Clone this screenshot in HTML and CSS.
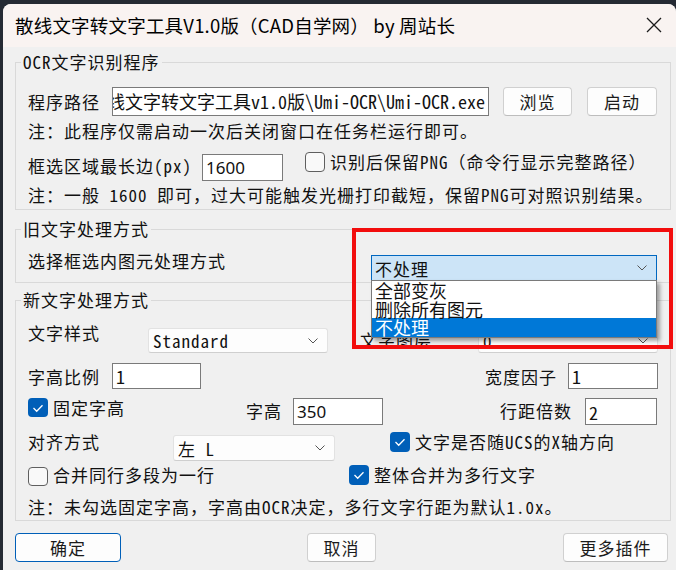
FILE: index.html
```html
<!DOCTYPE html>
<html lang="zh-CN">
<head>
	<meta charset="UTF-8">
	<title>散线文字转文字工具V1.0版</title>
	<link rel="stylesheet" href="styles.css">
</head>
<body>
<div class="window">
	<div class="titlebar">
		<span class="title">散线文字转文字工具V1.0版（CAD自学网） by 周站长</span>
		<svg class="close" width="16" height="16" viewBox="0 0 16 16"><path d="M1 1L15 15M15 1L1 15" stroke="#1b1b1b" stroke-width="1.3" fill="none"/></svg>
	</div>

	<div class="main">
		<!-- OCR -->
		<fieldset class="group g-ocr">
			<legend>OCR文字识别程序</legend>
			<div class="row r-path">
				<span class="lbl w84">程序路径</span>
				<div class="pathbox"><span>线文字转文字工具v1.0版\Umi-OCR\Umi-OCR.exe</span></div>
				<button class="btn b-browse">浏览</button>
				<button class="btn b-start">启动</button>
			</div>
			<div class="note">注：此程序仅需启动一次后关闭窗口在任务栏运行即可。</div>
			<div class="row r-size">
				<span class="lbl w174 lh30">框选区域最长边(px)</span>
				<div class="field f-size sans">1600</div>
				<span class="chk c-png"></span>
				<span class="lbl lh22 ml5">识别后保留PNG（命令行显示完整路径）</span>
			</div>
			<div class="note n2">注：一般 1600 即可，过大可能触发光栅打印截短，保留PNG可对照识别结果。</div>
		</fieldset>

		<!-- 旧文字 -->
		<fieldset class="group g-old">
			<legend>旧文字处理方式</legend>
			<div class="row r-old">
				<span class="lbl w343 lh26">选择框选内图元处理方式</span>
				<div class="combo open c-old">
					<span>不处理</span>
					<svg class="chev" width="10" height="6" viewBox="0 0 10 6"><path d="M0.5 0.5L5 5L9.5 0.5" stroke="#555" fill="none"/></svg>
					<ul class="droplist">
						<li>全部变灰</li>
						<li>删除所有图元</li>
						<li class="sel">不处理</li>
					</ul>
				</div>
			</div>
		</fieldset>

		<!-- 新文字 -->
		<fieldset class="group g-new">
			<legend>新文字处理方式</legend>
			<div class="row r-style">
				<span class="lbl w120 lh20">文字样式</span>
				<div class="combo c-style">
					<span>Standard</span>
					<svg class="chev" width="10" height="6" viewBox="0 0 10 6"><path d="M0.5 0.5L5 5L9.5 0.5" stroke="#555" fill="none"/></svg>
				</div>
				<span class="lbl w118 lh20 l-layer">文字图层</span>
				<div class="combo c-layer">
					<span>0</span>
					<svg class="chev" width="10" height="6" viewBox="0 0 10 6"><path d="M0.5 0.5L5 5L9.5 0.5" stroke="#555" fill="none"/></svg>
				</div>
			</div>
			<div class="row r-ratio">
				<span class="lbl w84">字高比例</span>
				<div class="field f-ratio">1</div>
				<span class="lbl w83 l-width">宽度因子</span>
				<div class="field f-width">1</div>
			</div>
			<div class="row r-height">
				<span class="chk on"><svg width="20" height="20" viewBox="0 0 20 20"><path d="M5.5 10L8.7 13.2L14.5 7.2" stroke="#fff" stroke-width="1.3" fill="none"/></svg></span>
				<span class="lbl w193 lh20 ml5">固定字高</span>
				<span class="lbl w47 lh20 mt3">字高</span>
				<div class="field f-height sans">350</div>
				<span class="lbl w85 lh20 mt3 l-spacing">行距倍数</span>
				<div class="field f-spacing">2</div>
			</div>
			<div class="row r-align">
				<span class="lbl w145 lh20">对齐方式</span>
				<div class="combo c-align">
					<span>左 L</span>
					<svg class="chev" width="10" height="6" viewBox="0 0 10 6"><path d="M0.5 0.5L5 5L9.5 0.5" stroke="#555" fill="none"/></svg>
				</div>
				<span class="chk on c-ucs"><svg width="20" height="20" viewBox="0 0 20 20"><path d="M5.5 10L8.7 13.2L14.5 7.2" stroke="#fff" stroke-width="1.3" fill="none"/></svg></span>
				<span class="lbl lh20 ml5">文字是否随UCS的X轴方向</span>
			</div>
			<div class="row r-merge">
				<div class="opt w321">
					<span class="chk c-line"></span>
					<span class="lbl lh20 ml5">合并同行多段为一行</span>
				</div>
				<span class="chk on"><svg width="20" height="20" viewBox="0 0 20 20"><path d="M5.5 10L8.7 13.2L14.5 7.2" stroke="#fff" stroke-width="1.3" fill="none"/></svg></span>
				<span class="lbl lh20 ml5">整体合并为多行文字</span>
			</div>
			<div class="note n3">注：未勾选固定字高，字高由OCR决定，多行文字行距为默认1.0x。</div>
		</fieldset>

		<div class="actions">
			<button class="btn default b-ok">确定</button>
			<button class="btn b-cancel">取消</button>
			<button class="btn b-more">更多插件</button>
		</div>
	</div>

	<div class="mark"></div>
</div>
</body>
</html>
```

FILE: styles.css
```css
body {
	margin : 0;
	background-color : #252a33;
	font-family : "Noto Sans Mono CJK SC", "Noto Sans CJK SC", sans-serif;
	font-size : 17px;
	letter-spacing : 1px;
	color : #111;
}
.window {
	position : relative;
	margin : 4px 0 0 3px;
	height : 566px;
	background-color : #f0f0f0;
	border-radius : 8px 8px 0 0;
	overflow : hidden;
}
.titlebar {
	height : 43px;
	display : flex;
	align-items : center;
	justify-content : space-between;
	padding : 0 14px 0 12px;
	background-color : #f9f3f1;
}
.title {
	font-family : "Noto Sans CJK SC", "Noto Sans", sans-serif;
	font-size : 18.5px;
	letter-spacing : 0.2px;
	color : #000;
	margin-top : -1px;
}
.close {
	margin-top : -2px;
}

.main {
	padding : 4px 5px 0 12px;
}

/* 分组框 */
.group {
	margin : 0;
	padding : 0;
	min-width : 0;
	border : 1px solid #d9d9d9;
}
.group legend {
	margin-left : 5px;
	padding : 0 2px;
	line-height : 22px;
}
.g-ocr { padding-top : 13px; }
.g-old { margin-top : 8px; padding-bottom : 1px; }
.g-new { margin-top : 6px; }

.row {
	display : flex;
	align-items : flex-start;
	padding-left : 12px;
}
.lbl {
	flex : none;
	white-space : nowrap;
}
.lh20 { line-height : 20px; }
.lh22 { line-height : 22px; }
.lh26 { line-height : 26px; }
.lh30 { line-height : 30px; }
.ml5 { margin-left : 5px; }
.mt3 { margin-top : 3px; }
.w47 { width : 47px; }
.w83 { width : 83px; }
.w84 { width : 84px; }
.w85 { width : 85px; }
.w118 { width : 118px; }
.w120 { width : 120px; }
.w145 { width : 145px; }
.w174 { width : 174px; }
.w193 { width : 193px; }
.w321 { width : 321px; }
.w343 { width : 343px; }

.note {
	padding-left : 12px;
	line-height : 30px;
	white-space : nowrap;
}
.note.n2 { line-height : 28px; }
.note.n3 { margin-top : 8px; line-height : 26px; }

/* 输入框 */
.pathbox, .field {
	box-sizing : border-box;
	flex : none;
	display : flex;
	align-items : center;
	background-color : #fff;
	border : 1px solid #7a7a7a;
	overflow : hidden;
	white-space : nowrap;
	padding : 0 3px;
	letter-spacing : 0;
	font-size : 18px;
}
.sans {
	font-family : "Noto Sans", sans-serif;
	font-size : 17px;
}
.r-path {
	height : 30px;
	align-items : center;
}
.pathbox {
	width : 377px;
	height : 29px;
	justify-content : flex-end;
}
.r-size { margin-top : 5px; }
.f-size { width : 81px; height : 27px; margin-top : 3px; }
.f-ratio { width : 89px; height : 26px; }
.f-width { width : 90px; height : 26px; }
.f-height { width : 90px; height : 27px; }
.f-spacing { width : 72px; height : 27px; }

/* 按钮 */
.btn {
	box-sizing : border-box;
	flex : none;
	height : 29px;
	padding : 0;
	background-color : #fdfdfd;
	border : 1px solid #d0d0d0;
	border-bottom-color : #bdbdbd;
	border-radius : 4px;
	font-family : inherit;
	font-size : 17px;
	letter-spacing : 1px;
	color : #1b1b1b;
}
.btn.default {
	border : 1px solid #005fb8;
}
.b-browse { width : 69px; margin-left : 14px; }
.b-start { width : 70px; margin-left : 15px; }

/* 复选框 */
.chk {
	box-sizing : border-box;
	flex : none;
	width : 20px;
	height : 20px;
	border : 1px solid #5f5f5f;
	border-radius : 4px;
	background-color : #f9f9f9;
}
.chk.on {
	border : none;
	background-color : #005fb8;
}
.chk svg {
	display : block;
}
.c-png { margin-left : 22px; margin-top : 1px; }

/* 下拉框 */
.combo {
	position : relative;
	box-sizing : border-box;
	flex : none;
	display : flex;
	align-items : center;
	justify-content : space-between;
	height : 25px;
	padding : 0 9px 0 4px;
	background-color : #fdfdfd;
	border : 1px solid #e2e2e2;
	border-bottom-color : #cfcfcf;
	border-radius : 3px;
}
.combo.open {
	background-color : #cce4f7;
	border : 1px solid #0067c0;
	border-radius : 0;
	padding-left : 3px;
}
.c-old { width : 286px; height : 26px; margin-top : 7px; }
.c-style { width : 180px; margin-top : 5px; }
.c-layer { width : 180px; margin-top : 5px; }
.c-align { width : 162px; height : 26px; margin-top : 3px; }

.droplist {
	position : absolute;
	top : 100%;
	left : -1px;
	right : -1px;
	margin : 0;
	padding : 0;
	list-style : none;
	background-color : #fff;
	border : 1px solid #7a7a7a;
	box-shadow : 3px 3px 4px rgba(0, 0, 0, 0.35);
	z-index : 2;
}
.droplist li {
	height : 18.6px;
	line-height : 18px;
	padding-left : 3px;
	font-size : 18px;
	letter-spacing : 0;
}
.droplist li.sel {
	background-color : #0078d7;
	color : #fff;
}

.g-old .r-old { margin-top : 8px; }
.r-style { margin-top : 12px; }
.l-layer { margin-left : 32px; margin-top : 7px; }
.r-ratio { margin-top : 10px; align-items : center; }
.l-width { margin-left : 284px; }
.r-height { margin-top : 9px; }
.r-height .chk { height : 19px; }
.l-spacing { margin-left : 117px; }
.r-align { margin-top : 7px; }
.c-ucs { margin-left : 55px; }
.r-merge { margin-top : 4px; }
.opt {
	display : flex;
	flex : none;
}
.c-line { height : 19px; margin-top : 2px; }

.actions {
	display : flex;
	margin-top : 12px;
}
.b-ok { width : 106px; }
.b-cancel { width : 69px; margin-left : 186px; }
.b-more { width : 105px; margin-left : 187px; }

/* 红框标注 */
.mark {
	position : absolute;
	left : 349px;
	top : 224px;
	width : 321px;
	height : 121px;
	box-sizing : border-box;
	border : 4px solid #f20d0d;
	z-index : 3;
}
```
